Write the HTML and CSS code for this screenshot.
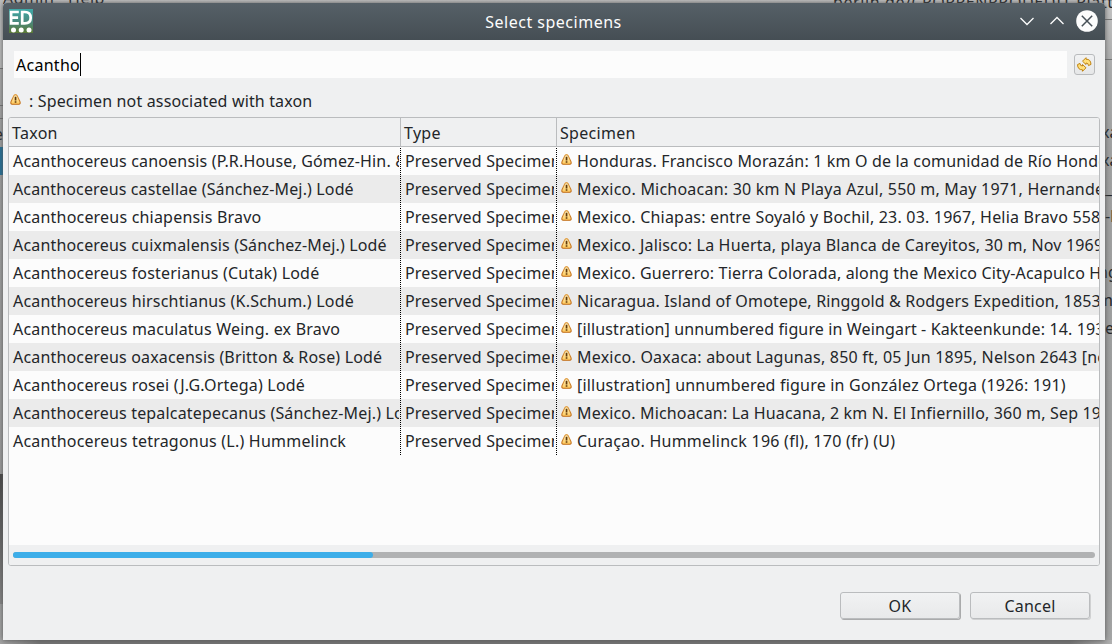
FILE: index.html
```html
<!DOCTYPE html>
<html lang="en">
<head>
<meta charset="utf-8">
<title>Select specimens</title>
<link rel="stylesheet" href="styles.css">
</head>
<body>
<svg class="defs" width="0" height="0">
  <linearGradient id="wf" x2="0" y2="1"><stop stop-color="#fff3c4"/><stop offset="1" stop-color="#ffc95a"/></linearGradient>
  <linearGradient id="ws" x2="0" y2="1"><stop stop-color="#e0a04a"/><stop offset="1" stop-color="#bf6a14"/></linearGradient>
  <symbol id="warn" viewBox="0 0 11 11"><path d="M3.9 1.600Q5.500 -.4 7.100 1.600L9.900 7.400Q10.800 10.200 8.800 10.200H2.200Q.2 10.200 1.100 7.400Z" fill="url(#wf)" stroke="url(#ws)" stroke-width="1.100"/><path d="M4.700 2.800h1.700v3.600H4.700zM4.700 7.200h1.700v1.500H4.700z" fill="#5f380a"/></symbol>
</svg>
<div class="backdrop">
  <span class="behind menu-text">Admin&nbsp;&nbsp; Help</span>
  <span class="behind path-text">berlin.de/( POPPENPRODEDIT Platt</span>
  <i class="behind left-band"></i><i class="behind left-rule r1"></i><i class="behind left-rule r2"></i><i class="behind left-rule r3"></i>
  <span class="behind left-e">e</span><i class="behind left-blue"></i><i class="behind left-dark"></i>
  <i class="behind right-rule q1"></i><i class="behind right-rule q2"></i>
  <div class="behind right-text"><span>xa</span><span>xa</span><span class="in">_(</span><span class="in">-l</span><span></span><span class="out">ng</span><span class="out">m</span><span class="in">e</span></div>
  <i class="behind bottom-fade"></i>
</div>
<main class="window">
  <header class="titlebar">
    <svg class="logo" width="24" height="24" viewBox="0 0 24 24"><defs><linearGradient id="lg" x2="0" y2="1"><stop stop-color="#3fa9a8"/><stop offset=".55" stop-color="#4b887c"/><stop offset="1" stop-color="#5c7a35"/></linearGradient></defs><rect width="24" height="24" fill="url(#lg)"/><path d="M9.800 3H2.100v11.400h7.700M2.100 8.600h7M13.200 3v11.400h2.500q6 0 6-5.700t-6-5.700z" fill="none" stroke="#fff" stroke-width="2.700"/><g fill="#fff"><circle cx="4.500" cy="21" r="2.500"/><circle cx="12.200" cy="21" r="2.500"/><circle cx="20" cy="21" r="2.500"/></g></svg>
    <h1>Select specimens</h1>
    <svg class="controls" width="84" height="24" viewBox="0 0 84 24" fill="none" stroke="#fcfcfc" stroke-width="1.300"><path d="M6.500 9l6.500 6.500 6.500-6.500M36.500 15l6.500-6.500 6.500 6.500"/><circle cx="73" cy="12" r="10.800" fill="#fcfcfc" stroke="none"/><path d="M67.800 6.800l10.400 10.400M78.200 6.800L67.800 17.200" stroke="#475057" stroke-width="1.500"/></svg>
  </header>
  <div class="search">
    <div class="field"><span>Acantho</span><i class="caret"></i></div>
    <button class="refresh" aria-label="Refresh"><svg width="15" height="15" viewBox="0 0 15 15" fill="#ffe07a" stroke="#c08312" stroke-width="1" stroke-linejoin="round"><path id="arrow" d="M5.500 4.200L9 .7V2.200Q13.700 2 14 7.400L11.500 8.600Q11.500 6 9 6V7.500Z"/><path d="M9 10.800L5.500 14.300V12.800Q.8 13 .5 7.600L3 6.400Q3 9 5.500 9V7.500Z"/></svg></button>
  </div>
  <div class="legend"><svg width="11" height="11"><use href="#warn"/></svg><span>: Specimen not associated with taxon</span></div>
  <section class="table">
    <div class="row head"><div>Taxon</div><div>Type</div><div>Specimen</div></div>
    <div class="row"><div>Acanthocereus canoensis (P.R.House, Gómez-Hin. &amp; H</div><div>Preserved Specimen</div><div><svg><use href="#warn"/></svg>Honduras. Francisco Morazán: 1 km O de la comunidad de Río Hondo</div></div>
    <div class="row"><div class="t14">Acanthocereus castellae (Sánchez-Mej.) Lodé</div><div>Preserved Specimen</div><div class="t23"><svg><use href="#warn"/></svg>Mexico. Michoacan: 30 km N Playa Azul, 550 m, May 1971, Hernandez</div></div>
    <div class="row"><div class="t20">Acanthocereus chiapensis Bravo</div><div>Preserved Specimen</div><div class="t20"><svg><use href="#warn"/></svg>Mexico. Chiapas: entre Soyaló y Bochil, 23. 03. 1967, Helia Bravo 5588</div></div>
    <div class="row"><div>Acanthocereus cuixmalensis (Sánchez-Mej.) Lodé</div><div>Preserved Specimen</div><div><svg><use href="#warn"/></svg>Mexico. Jalisco: La Huerta, playa Blanca de Careyitos, 30 m, Nov 1969,</div></div>
    <div class="row"><div class="t20">Acanthocereus fosterianus (Cutak) Lodé</div><div>Preserved Specimen</div><div><svg><use href="#warn"/></svg>Mexico. Guerrero: Tierra Colorada, along the Mexico City-Acapulco Hi</div></div>
    <div class="row"><div class="t20">Acanthocereus hirschtianus (K.Schum.) Lodé</div><div>Preserved Specimen</div><div><svg><use href="#warn"/></svg>Nicaragua. Island of Omotepe, Ringgold &amp; Rodgers Expedition, 1853-</div></div>
    <div class="row"><div class="t23">Acanthocereus maculatus Weing. ex Bravo</div><div>Preserved Specimen</div><div class="t14"><svg><use href="#warn"/></svg>[illustration] unnumbered figure in Weingart - Kakteenkunde: 14. 1933</div></div>
    <div class="row"><div>Acanthocereus oaxacensis (Britton &amp; Rose) Lodé</div><div>Preserved Specimen</div><div class="t23"><svg><use href="#warn"/></svg>Mexico. Oaxaca: about Lagunas, 850 ft, 05 Jun 1895, Nelson 2643 [no</div></div>
    <div class="row"><div class="t20">Acanthocereus rosei (J.G.Ortega) Lodé</div><div>Preserved Specimen</div><div class="t20"><svg><use href="#warn"/></svg>[illustration] unnumbered figure in González Ortega (1926: 191)</div></div>
    <div class="row"><div>Acanthocereus tepalcatepecanus (Sánchez-Mej.) Lodé</div><div>Preserved Specimen</div><div><svg><use href="#warn"/></svg>Mexico. Michoacan: La Huacana, 2 km N. El Infiernillo, 360 m, Sep 19</div></div>
    <div class="row"><div class="t23">Acanthocereus tetragonus (L.) Hummelinck</div><div>Preserved Specimen</div><div class="t26"><svg><use href="#warn"/></svg>Curaçao. Hummelinck 196 (fl), 170 (fr) (U)</div></div>
    <div class="scroll"><div class="track"><div class="thumb"></div></div></div>
  </section>
  <footer><button class="btn ok">OK</button><button class="btn">Cancel</button></footer>
</main>
</body>
</html>
```
FILE: styles.css
```css
* { box-sizing: border-box; }
body { margin: 0; width: 1112px; height: 644px; padding: 3px 0 0 3px; overflow: hidden; position: relative; background: #a0a1a1; color: #232629; font: 16px/28px "Noto Sans", sans-serif; }
.defs { position: absolute; }
.backdrop { position: absolute; inset: 0; overflow: hidden; background: linear-gradient(#c4c4c4, #aaabab 70px, #a0a1a1 150px, #9b9c9c 580px, #a5a6a6); }
.behind { position: absolute; display: block; white-space: nowrap; }
.menu-text { left: 3px; top: -14px; line-height: 24px; letter-spacing: .45px; }
.path-text { left: 833px; top: -10px; line-height: 24px; letter-spacing: .6px; }
.left-band { left: 0; top: 0; width: 3px; height: 68px; background: #bcbdbd; }
.left-rule { left: 0; width: 3px; height: 1px; background: #727373; }
.r1 { top: 68px; } .r2 { top: 105px; } .r3 { top: 118px; }
.left-e { left: -6px; top: 120px; }
.left-blue { left: 0; top: 147px; width: 3px; height: 28px; background: #216f98; }
.left-dark { left: 0; top: 474px; width: 3px; height: 130px; background: linear-gradient(#454545, #858585); }
.right-rule { left: 1105px; width: 7px; height: 1px; background: #747575; }
.q1 { top: 19px; } .q2 { top: 59px; }
.right-text { left: 1101px; top: 118px; }
.right-text span { display: block; height: 28px; }
.right-text .in { padding-left: 4px; }
.right-text .out { margin-left: -3px; }
.bottom-fade { left: 0; top: 640px; width: 1112px; height: 4px; background: linear-gradient(90deg, #a2a2a2, #747474 40px, #747474 1070px, #b0b0b0); }
.window { position: relative; width: 1102px; height: 637px; display: flex; flex-direction: column; background: #eff0f1; border-radius: 4px 4px 0 0; overflow: hidden; box-shadow: 0 0 5px #555; }
.titlebar { height: 37px; flex: none; display: grid; grid-template-columns: 84px 1fr 84px; align-items: center; padding: 0 7px 0 6px; background: linear-gradient(#566067, #454e54); }
.logo { margin-top: -1px; }
h1 { margin: 0; color: #fcfcfc; font-size: 16px; font-weight: 400; text-align: center; letter-spacing: .5px; }
.controls { margin-top: -1px; }
.search { display: flex; align-items: center; gap: 7px; height: 27px; margin: 11px 10px 0 11px; flex: none; }
.field { width: 1053px; height: 27px; display: flex; align-items: center; padding-left: 2px; background: #fcfcfc; color: #000; letter-spacing: .27px; }
.caret { width: 1px; height: 23px; background: #000; }
.refresh { width: 21px; height: 21px; padding: 2px; display: flex; border: 1px solid #b9bbbd; border-radius: 3px; background: linear-gradient(#f1f2f3, #e6e7e8); }
.legend { height: 28px; margin: 9px 0 2px 7px; display: flex; align-items: center; gap: 8px; flex: none; letter-spacing: .15px; }
.legend svg { margin-top: -3px; }
.table { height: 449px; width: 1092px; margin-left: 5px; flex: none; display: flex; flex-direction: column; border: 1px solid #babcbe; border-radius: 3px; background: #fcfcfc; overflow: hidden; }
.row { display: grid; grid-template-columns: 392px 156px 542px; height: 28px; flex: none; letter-spacing: .17px; }
.row > div { padding-left: 4px; overflow: hidden; white-space: nowrap; }
.row .t14 { letter-spacing: .14px; }
.row .t20 { letter-spacing: .2px; }
.row .t23 { letter-spacing: .22px; }
.row .t26 { letter-spacing: .26px; }
/* the transparent border trims long text just short of the dotted divider */
.row:not(.head) > div:nth-child(-n+2) { border-right: 2px solid transparent; background: linear-gradient(#000 50%, transparent 50%) right / 1px 2px repeat-y border-box; }
.row:not(.head) > div:nth-child(2) { border-right-width: 3px; }
.row:nth-child(odd):not(.head) { background: #ebebeb; }
.row svg { width: 11px; height: 11px; margin: 0 5px 0 0; vertical-align: 2px; }
.head { height: 29px; background: #eff0f1; border-bottom: 1px solid #babcbe; letter-spacing: .3px; }
.head > div { padding-left: 3px; line-height: 30px; }
.head > div:nth-child(-n+2) { border-right: 1px solid #babcbe; }
.scroll { height: 20px; flex: none; margin-top: auto; padding: 7px 4px 0 4px; background: #eff0f1; }
.track { height: 6px; border-radius: 3px; background: #b1b2b3; }
.thumb { width: 360px; height: 6px; border-radius: 3px; background: #3daee9; }
footer { display: flex; justify-content: flex-end; gap: 10px; padding: 26px 15px 0; }
.btn { width: 120px; height: 27px; padding: 0; border: 1px solid #babcbe; border-radius: 3px; background: linear-gradient(#f1f2f3, #e8e9ea); color: inherit; font: inherit; line-height: 26px; letter-spacing: .2px; box-shadow: 1px 1px 0 #d0d1d2; }
.ok { box-shadow: 1px 1px 0 #aaabac; }
```
